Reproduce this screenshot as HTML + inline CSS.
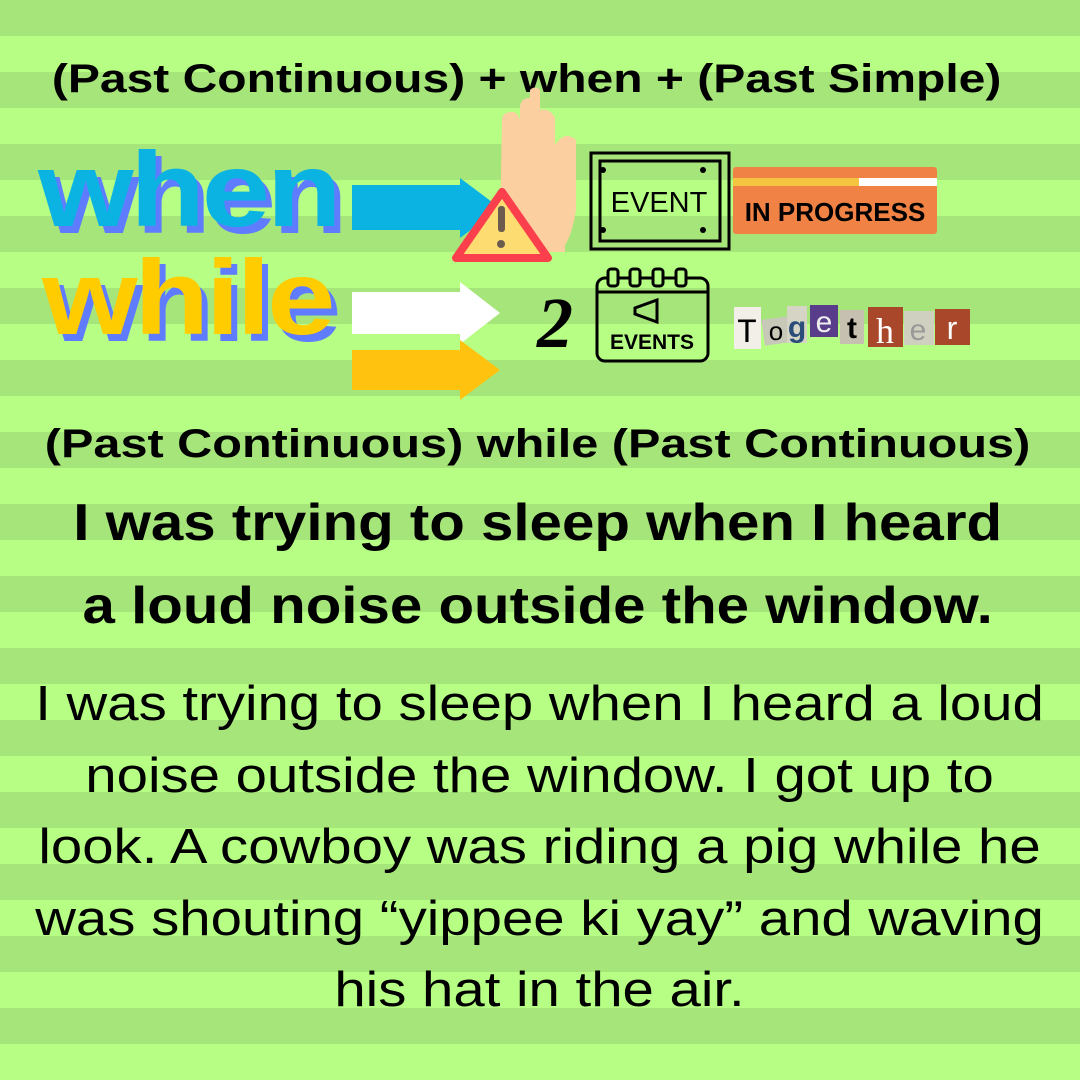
<!DOCTYPE html>
<html><head><style>
html,body{margin:0;padding:0}
body{width:1080px;height:1080px;position:relative;overflow:hidden;font-family:"Liberation Sans",sans-serif;
background:repeating-linear-gradient(180deg,#a6e57a 0 36px,#b6fe84 36px 72px);}
.t{position:absolute;left:0;width:1080px;text-align:center;color:#000;white-space:nowrap}
.t span{display:inline-block}
.big{font-family:"Liberation Sans",sans-serif;font-weight:900;position:absolute;letter-spacing:-3px;font-size:106px;line-height:1;transform:scaleX(1.16);transform-origin:left top}
</style></head><body>
<div class="t" style="top:57px;font-size:40px;font-weight:bold;left:-13px"><span style="transform:scaleX(1.2)">(Past Continuous) + when + (Past Simple)</span></div>

<div class="big" style="left:44px;top:144px;color:#5f7cff">when</div>
<div class="big" style="left:38px;top:137px;color:#0bb3e2">when</div>
<div class="big" style="left:48px;top:252px;color:#5f7cff">while</div>
<div class="big" style="left:42px;top:245px;color:#ffcc00">while</div>

<svg style="position:absolute;left:0;top:0" width="1080" height="420">
<path d="M352 185 H460 V178 L500 208 L460 238 V230 H352 Z" fill="#0bb3e2"/>
<path d="M352 292 H460 V282 L500 313 L460 344 V334 H352 Z" fill="#fff"/>
<path d="M352 350 H460 V340 L500 370 L460 400 V390 H352 Z" fill="#ffc20e"/>
<path d="M502 120 Q502 112 512 112 Q518 112 520 120 V108 Q520 98 530 98 V90 Q535 85 540 90 V110 Q550 108 555 118 V145 Q565 130 576 140 V210 Q572 235 565 245 V252 H500 V230 Z" fill="#fccfa0"/>
<path d="M502 192 L548 258 H456 Z" fill="#fddc72" stroke="#fb3f4c" stroke-width="8" stroke-linejoin="round"/>
<rect x="498" y="206" width="7" height="26" rx="3" fill="#6b5c4f"/>
<circle cx="501" cy="244" r="4" fill="#6b5c4f"/>
<rect x="591" y="153" width="138" height="96" fill="none" stroke="#000" stroke-width="3"/>
<rect x="600" y="161" width="120" height="80" fill="none" stroke="#000" stroke-width="3"/>
<circle cx="603" cy="170" r="3"/><circle cx="703" cy="170" r="3"/><circle cx="603" cy="230" r="3"/><circle cx="703" cy="230" r="3"/>
<text x="659" y="212" font-size="29" text-anchor="middle" font-family="Liberation Sans">EVENT</text>
<rect x="733" y="167" width="204" height="67" rx="3" fill="#ef8244"/>
<rect x="733" y="178" width="126" height="8" fill="#f5c542"/>
<rect x="859" y="178" width="78" height="8" fill="#fff"/>
<text x="835" y="221" font-size="26" font-weight="bold" text-anchor="middle" font-family="Liberation Sans">IN PROGRESS</text>
<text x="555" y="347" font-size="72" font-weight="bold" text-anchor="middle" font-family="Liberation Serif" font-style="italic">2</text>
<rect x="597" y="278" width="111" height="83" rx="8" fill="none" stroke="#000" stroke-width="3"/>
<line x1="597" y1="292" x2="708" y2="292" stroke="#000" stroke-width="3"/>
<g fill="#b6fe84" stroke="#000" stroke-width="3"><rect x="608" y="269" width="10" height="17" rx="3"/><rect x="630" y="269" width="10" height="17" rx="3"/><rect x="653" y="269" width="10" height="17" rx="3"/><rect x="676" y="269" width="10" height="17" rx="3"/></g>
<path d="M635 308 L657 300 V322 L635 314 Z" fill="none" stroke="#000" stroke-width="3"/>
<text x="652" y="349" font-size="21" font-weight="bold" text-anchor="middle" font-family="Liberation Sans">EVENTS</text>
<rect x="734" y="307" width="27" height="42" fill="#f1efe8"/><text x="747" y="342" font-size="34" text-anchor="middle" font-family="Liberation Mono">T</text>
<rect x="763" y="318" width="26" height="26" fill="#c8c8b8" transform="rotate(-8 776 331)"/><text x="776" y="340" font-size="26" text-anchor="middle" font-family="Liberation Sans">o</text>
<rect x="787" y="306" width="20" height="37" fill="#d6d5c5"/><text x="797" y="337" font-size="30" fill="#2a4d7a" font-weight="bold" text-anchor="middle">g</text>
<rect x="810" y="305" width="28" height="32" fill="#5a3d8a"/><text x="824" y="332" font-size="30" fill="#eee" text-anchor="middle">e</text>
<rect x="840" y="310" width="24" height="34" fill="#c6c0b0"/><text x="852" y="338" font-size="30" font-weight="bold" text-anchor="middle">t</text>
<rect x="868" y="307" width="35" height="40" fill="#a9472a"/><text x="885" y="343" font-size="36" fill="#fff" text-anchor="middle" font-family="Liberation Serif">h</text>
<rect x="904" y="311" width="30" height="34" fill="#d0d0c0"/><text x="918" y="340" font-size="30" fill="#999" text-anchor="middle">e</text>
<rect x="935" y="309" width="35" height="36" fill="#a9472a"/><text x="952" y="339" font-size="32" fill="#fff" text-anchor="middle">r</text>
</svg>

<div class="t" style="top:422px;font-size:40px;font-weight:bold;left:-2px"><span style="transform:scaleX(1.215)">(Past Continuous) while (Past Continuous)</span></div>
<div class="t" style="top:482px;font-size:52px;font-weight:bold;line-height:83px;left:-2px"><span style="transform:scaleX(1.12)">I was trying to sleep when I heard<br>a loud noise outside the window.</span></div>
<div class="t" style="top:669px;font-size:49px;line-height:71.5px"><span style="transform:scaleX(1.15)">I was trying to sleep when I heard a loud<br>noise outside the window. I got up to<br>look. A cowboy was riding a pig while he<br>was shouting “yippee ki yay” and waving<br>his hat in the air.</span></div>
</body></html>
